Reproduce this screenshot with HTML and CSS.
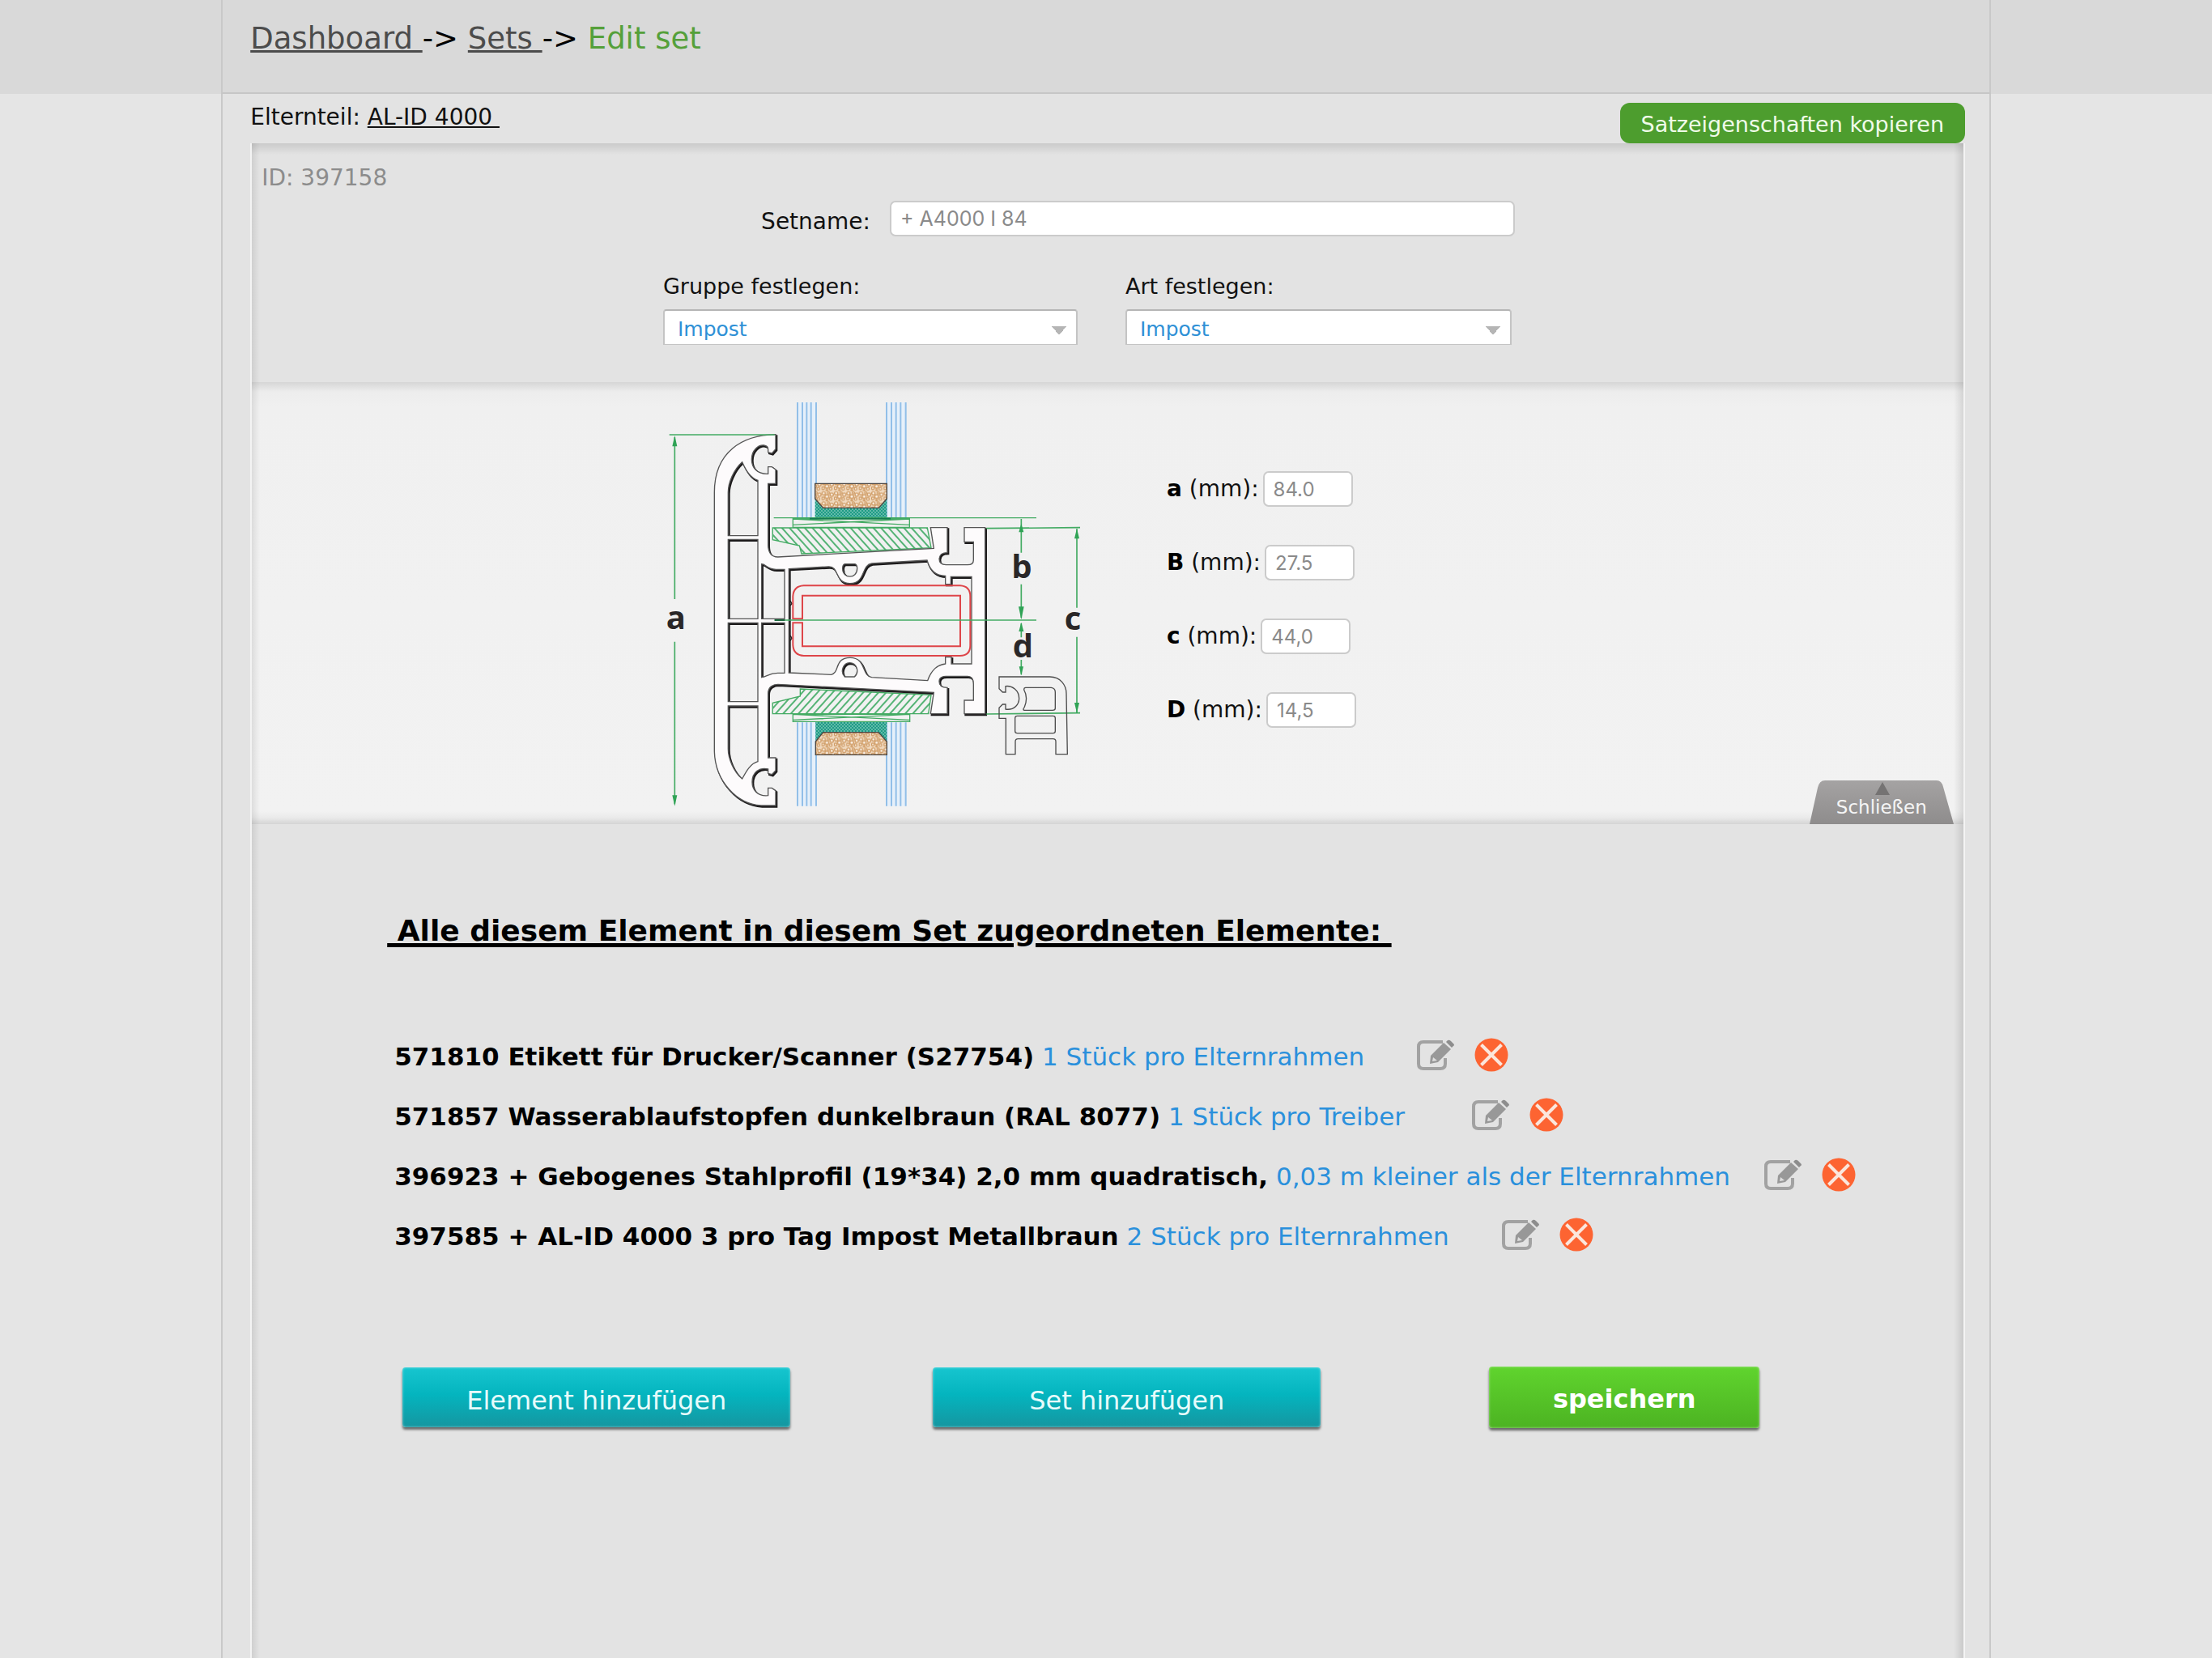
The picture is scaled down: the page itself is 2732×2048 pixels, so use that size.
FILE: index.html
```html
<!DOCTYPE html>
<html lang="de">
<head>
<meta charset="utf-8">
<meta name="viewport" content="width=device-width, initial-scale=1">
<title>Edit set</title>
<link rel="stylesheet" href="styles.css">
</head>
<body>
<svg class="sprite" aria-hidden="true">
  <symbol id="icon-edit" viewBox="0 0 48 38">
    <path d="M33 3H9Q3 3 3 9V30Q3 36 9 36H30Q36 36 36 30V23" fill="none" stroke="#a2a2a2" stroke-width="4"/>
    <path d="M17 30L18 20L34 4L43 12L27 28Z" fill="#989898"/>
    <path d="M37 3L39 1Q41 0 43 2L46 5Q48 7 46 8L44 10Z" fill="#8d8d8d"/>
    <path d="M21 22L26 26L20 27Z" fill="#dedede"/>
  </symbol>
  <symbol id="icon-delete" viewBox="0 0 42 42">
    <circle cx="21" cy="21" r="20.5" fill="#fd6432"/>
    <path d="M8.500 8.500L33.500 33.500M33.500 8.500L8.500 33.500" stroke="#fbe6dc" stroke-width="4"/>
  </symbol>
</svg>

<header class="topbar">
  <nav class="frame crumbs" aria-label="Breadcrumb"><a href="#">Dashboard </a>-&gt; <a href="#">Sets </a>-&gt; <span class="crumbs-current">Edit set</span></nav>
</header>

<main class="frame content">
  <div class="parent-row">
    <p class="parent">Elternteil: <a href="#">AL-ID 4000 </a></p>
    <button class="copy" type="button">Satzeigenschaften kopieren</button>
  </div>

  <div class="panel">
    <section class="settings">
      <p class="set-id">ID: 397158</p>
      <div class="form">
        <div class="name-row">
          <label for="setname">Setname:</label>
          <input class="box name" id="setname" type="text" value="+ A4000 I 84">
        </div>
        <div class="select-row">
          <div class="group">
            <label for="gruppe">Gruppe festlegen:</label>
            <select id="gruppe"><option>Impost</option></select>
          </div>
          <div class="kind">
            <label for="art">Art festlegen:</label>
            <select id="art"><option>Impost</option></select>
          </div>
        </div>
      </div>
    </section>

    <section class="measures">
      <svg class="drawing" viewBox="57 30 1575 1530" role="img" aria-label="Profilschnitt">
        <defs>
          <pattern id="hatch-down" width="21" height="21" patternUnits="userSpaceOnUse" patternTransform="rotate(-42)"><path d="M3 0V21" stroke="#35a75c" stroke-width="5"/></pattern>
          <pattern id="hatch-up" width="21" height="21" patternUnits="userSpaceOnUse" patternTransform="rotate(42)"><path d="M3 0V21" stroke="#35a75c" stroke-width="5"/></pattern>
          <pattern id="dots" width="12" height="12" patternUnits="userSpaceOnUse"><path d="M0 0H12V12H0Z" fill="#1f9c86"/><circle cx="3" cy="3" r="2" fill="#d5f0e8"/><circle cx="9" cy="9" r="2" fill="#d5f0e8"/></pattern>
          <pattern id="sand" width="46" height="38" patternUnits="userSpaceOnUse"><path d="M0 0H46V38H0Z" fill="#f0d9bf"/><g fill="#fbf3ea" stroke="#cf9a62" stroke-width="4"><circle cx="8" cy="8" r="6"/><circle cx="26" cy="6" r="4"/><circle cx="38" cy="13" r="6"/><circle cx="20" cy="20" r="7"/><circle cx="6" cy="27" r="5"/><circle cx="34" cy="29" r="5"/><circle cx="20" cy="34" r="3"/></g></pattern>
          <path id="profile" fill-rule="evenodd" d="M474 170C350 172 247 235 247 385V1345C250 1455 330 1540 420 1545H474V1490L460 1480H446V1508C405 1512 387 1485 387 1458C387 1420 415 1402 446 1410V1426L460 1430L474 1415V1368H446V1130C446 1105 465 1096 482 1096L1060 1126L1048 1205H1110V1108C1085 1108 1080 1098 1080 1085C1080 1070 1095 1066 1105 1066H1185C1203 1066 1207 1080 1207 1095V1155H1173V1205H1250V515H1173V568H1207V635C1207 648 1197 653 1185 653H1105C1085 653 1080 640 1080 630C1082 614 1090 608 1110 608V515H1048L1060 592L482 624C457 624 446 605 446 580V352H474V300L460 290H446V316C402 318 385 290 385 262C385 228 410 208 430 210Q446 212 446 225V236L460 240L474 224Z
            M350 272C318 300 298 350 298 385V545H408V340C380 330 365 305 350 272Z
            M298 559H408V853H298Z M298 868H408V1160H298Z
            M298 1176H408V1382C380 1390 365 1418 350 1446C318 1420 298 1370 298 1335Z
            M422 650C438 650 440 668 475 670H507V853H422Z
            M422 868H507V1054H482C450 1054 440 1068 422 1070Z
            M523 668L670 660C712 658 690 722 750 722C808 722 790 654 830 648L1035 636C1042 662 1060 694 1103 694V725H1123V697H1200V1020H1125V995H1103V1020C1060 1025 1045 1060 1037 1082L830 1070C792 1065 810 997 750 997C690 997 712 1054 680 1060L523 1053Z
            M730 650H768Q776 652 776 667C776 706 722 706 722 667Q722 652 730 650Z
            M730 1068C712 1050 724 1016 748 1016C774 1016 786 1050 766 1068Z"/>
        </defs>
        <path d="M555 51H624V479H555ZM885 51H956V479H885ZM555 1237H624V1547H555ZM885 1237H956V1547H885Z" fill="#e6f0fa"/>
        <g stroke="#92bfe8" stroke-width="6">
          <path d="M555 51V479M573 51V479M589 51V479M605 51V479M624 51V479M885 51V479M903 51V479M920 51V479M937 51V479M956 51V479"/>
          <path d="M555 1237V1547M573 1237V1547M589 1237V1547M605 1237V1547M624 1237V1547M885 1237V1547M903 1237V1547M920 1237V1547M937 1237V1547M956 1237V1547"/>
        </g>
        <path d="M620 405L650 442H856L886 405V483H620ZM622 1236H886V1308L855 1274H650L622 1308Z" fill="url(#dots)"/>
        <path d="M620 352H886V408L856 442H650L620 408ZM622 1308L650 1274H855L886 1308V1357H622Z" fill="url(#sand)" stroke="#4a4440" stroke-width="4"/>
        <g stroke="#43ab63" stroke-width="4" fill="none">
          <path d="M463 516H1036L1050 590L570 612L562 582L463 560Z" fill="url(#hatch-down)"/>
          <path d="M463 1205H1040L1050 1135L565 1113V1140L463 1165Z" fill="url(#hatch-up)"/>
          <path d="M467 479H1440M538 483H970V514H538ZM538 483L970 505M970 483L538 505M538 1207H971V1234H538ZM538 1207L971 1228M971 1207L538 1228"/>
        </g>
        <path d="M600 482H900" stroke="#157a52" stroke-width="5"/>
        <use href="#profile" x="4" y="5" fill="#1c1a1b" stroke="#1c1a1b" stroke-width="6"/>
        <use href="#profile" fill="#fdfbfc" stroke="#555" stroke-width="4"/>
        <path d="M528 786L534 797L528 804M528 915L534 925L528 934" fill="none" stroke="#222" stroke-width="4"/>
        <g fill="none" stroke="#de4549" stroke-width="6">
          <path d="M538 853V770Q540 732 578 730H1157Q1195 732 1195 770V952Q1195 990 1157 990H578Q540 988 538 950V868H573V955H1158V767H573V853Z"/>
        </g>
        <path d="M470 858H1440" stroke="#43ab63" stroke-width="4"/>
        <path d="M470 858H508" stroke="#1f6b40" stroke-width="6"/>
        <g stroke="#43ab63" stroke-width="5" fill="none">
          <path d="M80 171H470M100 180V780M100 938V1540M1384 483V608M1384 725V850M1384 870V922M1384 1005V1060M1590 520V812M1590 920V1200M1255 518L1602 515M1255 1206L1602 1202"/>
        </g>
        <path d="M100 174L109 214H91ZM100 1547L109 1507H91ZM1384 500L1393 532H1375ZM1384 856L1394 808H1374ZM1384 866L1393 900H1375ZM1384 1063L1392 1030H1376ZM1590 518L1599 556H1581ZM1590 1202L1599 1164H1581Z" fill="#2fa355"/>
        <g fill="none" stroke="#4c4c4c" stroke-width="4">
          <path d="M1302 1068H1490C1530 1068 1551 1100 1551 1130L1555 1355H1512V1308Q1512 1298 1502 1298H1372Q1362 1298 1362 1308V1355H1327V1222H1302V1183L1315 1170H1326V1188C1360 1193 1376 1168 1376 1148C1376 1118 1350 1100 1326 1103V1125H1315L1302 1112Z"/>
          <path d="M1400 1108H1495Q1510 1110 1510 1125V1185Q1510 1192 1500 1192H1395Q1388 1190 1396 1180C1406 1155 1405 1135 1394 1116Q1394 1108 1400 1108Z"/>
          <rect x="1361" y="1213" width="149" height="64" rx="8"/>
        </g>
        <g class="dims">
          <text x="68" y="892">a</text><text x="1348" y="703">b</text><text x="1544" y="895">c</text><text x="1352" y="996">d</text>
        </g>
      </svg>
      <div class="fields">
        <div class="field"><label for="ma"><b>a</b> (mm):</label><input class="box size" id="ma" type="text" value="84.0"></div>
        <div class="field"><label for="mb"><b>B</b> (mm):</label><input class="box size" id="mb" type="text" value="27.5"></div>
        <div class="field"><label for="mc"><b>c</b> (mm):</label><input class="box size" id="mc" type="text" value="44,0"></div>
        <div class="field"><label for="md"><b>D</b> (mm):</label><input class="box size" id="md" type="text" value="14,5"></div>
      </div>
      <button class="close" type="button">
        <svg class="close-shape" viewBox="0 0 178 54" aria-hidden="true">
          <defs><linearGradient id="tab" x2="0" y2="1"><stop stop-color="#a5a3a3"/><stop offset="1" stop-color="#8e8c8c"/></linearGradient></defs>
          <path d="M0 54L10 9Q12 0 19 0H157Q163 0 165 8L178 54Z" fill="url(#tab)"/>
          <path d="M90 2L99 18H81Z" fill="#757373"/>
        </svg>
        <span class="close-text">Schließen</span>
      </button>
    </section>

    <section class="assigned">
      <h1>&nbsp;Alle diesem Element in diesem Set zugeordneten Elemente:&nbsp;</h1>
      <ul class="items">
        <li class="item">
          <p><b>571810 Etikett für Drucker/Scanner (S27754)</b> <span>1 Stück pro Elternrahmen</span></p>
          <div class="actions"><button type="button" aria-label="Bearbeiten"><svg class="edit"><use href="#icon-edit"/></svg></button><button type="button" aria-label="Löschen"><svg class="delete"><use href="#icon-delete"/></svg></button></div>
        </li>
        <li class="item item-wide">
          <p><b>571857 Wasserablaufstopfen dunkelbraun (RAL 8077)</b> <span>1 Stück pro Treiber</span></p>
          <div class="actions"><button type="button" aria-label="Bearbeiten"><svg class="edit"><use href="#icon-edit"/></svg></button><button type="button" aria-label="Löschen"><svg class="delete"><use href="#icon-delete"/></svg></button></div>
        </li>
        <li class="item item-tight">
          <p><b>396923 + Gebogenes Stahlprofil (19*34) 2,0 mm quadratisch,</b> <span>0,03 m kleiner als der Elternrahmen</span></p>
          <div class="actions"><button type="button" aria-label="Bearbeiten"><svg class="edit"><use href="#icon-edit"/></svg></button><button type="button" aria-label="Löschen"><svg class="delete"><use href="#icon-delete"/></svg></button></div>
        </li>
        <li class="item">
          <p><b>397585 + AL-ID 4000 3 pro Tag Impost Metallbraun</b> <span>2 Stück pro Elternrahmen</span></p>
          <div class="actions"><button type="button" aria-label="Bearbeiten"><svg class="edit"><use href="#icon-edit"/></svg></button><button type="button" aria-label="Löschen"><svg class="delete"><use href="#icon-delete"/></svg></button></div>
        </li>
      </ul>
      <div class="buttons">
        <button class="add" type="button">Element hinzufügen</button>
        <button class="add" type="button">Set hinzufügen</button>
        <button class="save" type="submit">speichern</button>
      </div>
    </section>
  </div>
</main>
</body>
</html>
```

FILE: styles.css
```css
* { box-sizing: border-box; }

body {
  margin: 0;
  min-height: 100vh;
  display: flex;
  flex-direction: column;
  background: #e5e5e5;
  color: #111;
  font: 27px/40px "DejaVu Sans", Verdana, sans-serif;
}

p, h1, ul { margin: 0; padding: 0; }

button, input, select { font: inherit; }

button {
  border: 0;
  padding: 0;
  background: none;
  cursor: pointer;
}

.sprite { position: absolute; width: 0; height: 0; }

.frame {
  width: 80%;
  margin: 0 auto;
  padding: 0 30px 0 34px;
  border: solid #c9c9c9;
  border-width: 0 2px;
}

.topbar { background: #d9d9d9; }

.crumbs {
  height: 116px;
  padding-top: 24px;
  border-bottom: 2px solid #c6c6c6;
  font-size: 37px;
  line-height: 48px;
  color: #000;
}

.crumbs a { color: #4c4c4c; white-space: pre; }
.crumbs-current { color: #55a03a; }

.content {
  flex: 1;
  display: flex;
  flex-direction: column;
  background: #e3e3e3;
}

.parent-row {
  display: flex;
  justify-content: space-between;
  align-items: flex-start;
  padding-top: 11px;
}

.parent { font-size: 28px; line-height: 36px; }
.parent a { color: inherit; white-space: pre; }

.copy {
  width: 426px;
  height: 50px;
  padding-top: 4px;
  border-radius: 12px;
  background: #4d9d2e;
  color: #f0fbe9;
}

.panel {
  position: relative;
  flex: 1;
  display: flex;
  flex-direction: column;
  border-left: 2px solid #f3f3f3;
}

/* soft recess along the panel edges */
.panel::after {
  content: "";
  position: absolute;
  inset: 0;
  pointer-events: none;
  border-right: 2px solid #f3f3f3;
  background:
    linear-gradient(#0000001c, #00000000) top / 100% 14px no-repeat,
    linear-gradient(to right, #00000016, #00000000) left / 10px 100% no-repeat,
    linear-gradient(to left, #0000001c, #00000000) right / 12px 100% no-repeat;
}

.settings { padding: 23px 0 46px; }

.set-id { padding-left: 12px; font-size: 28px; color: #8c8c8c; }

.form {
  display: flex;
  flex-direction: column;
  gap: 42px;
  width: 1052px;
  margin: 8px 0 0 24%;
}

.name-row { display: flex; justify-content: flex-end; gap: 24px; }
.name-row label { padding-top: 8px; font-size: 28px; line-height: 36px; }

.box {
  height: 44px;
  padding: 0 11px;
  border: 2px solid #cbcbcb;
  border-radius: 7px;
  background: #fff;
  color: #8a8a8a;
  font: 24px/28px Inter, sans-serif;
}

.name { width: 772px; font-size: 25px; }
.size { width: 111px; }

.select-row { display: flex; gap: 59px; }
.select-row > div { display: flex; flex-direction: column; gap: 8px; }
.group { width: 512px; }
.kind { width: 477px; }

select {
  appearance: none;
  height: 44px;
  padding: 4px 16px 0;
  border: solid #c4c4c4;
  border-width: 2px 2px 1px;
  border-top-color: #b5b5b5;
  border-radius: 4px 4px 0 0;
  background:
    linear-gradient(to bottom right, #b5b5b5 50%, #00000000 50%) right 12px top 19px / 9px 11px no-repeat,
    linear-gradient(to bottom left, #b5b5b5 50%, #00000000 50%) right 21px top 19px / 9px 11px no-repeat,
    #fff;
  color: #2e90d6;
  font-size: 25px;
  line-height: 32px;
}

.measures {
  position: relative;
  display: flex;
  gap: 97px;
  padding: 18px 0 18px 24%;
  background: linear-gradient(#d6d6d6, #ededed 12px, #f0f0f0 30px, #f2f2f2 calc(100% - 16px), #eaeaea calc(100% - 8px), #d4d4d4);
}

.drawing { flex: none; width: 525px; height: 510px; }

.dims {
  font: 700 120px "Open Sans", sans-serif;
  fill: #2a2728;
}

.fields {
  display: flex;
  flex-direction: column;
  gap: 47px;
  padding-top: 92px;
  font-size: 28px;
}

.field { display: flex; align-items: center; gap: 5px; height: 44px; }
.field b { color: #000; }

.close {
  position: absolute;
  right: 14px;
  bottom: 0;
  display: grid;
  width: 178px;
  height: 54px;
  color: #f5f5f5;
  font-size: 23px;
  line-height: 28px;
}

.close > * { grid-area: 1 / 1; }
.close-shape { width: 178px; height: 54px; }
.close-text { position: relative; padding-top: 19px; }

.assigned { flex: 1; padding: 108px 0 80px 167px; }

h1 {
  color: #000;
  font-size: 36px;
  line-height: 48px;
  text-decoration: underline;
  text-decoration-thickness: 5px;
}

.items {
  margin: 94px 0 124px 9px;
  list-style: none;
  color: #000;
  font-size: 31px;
}

.item { display: flex; align-items: center; gap: 64px; height: 74px; }
.item-wide { gap: 82px; }
.item-tight { gap: 41px; }
.item span { color: #2a90dc; }

.actions { display: flex; align-items: center; gap: 24px; padding-bottom: 4px; }
.actions svg { display: block; }
.edit { width: 48px; height: 38px; }
.delete { width: 42px; height: 42px; }

.buttons {
  display: flex;
  align-items: center;
  gap: 176px;
  padding-left: 19px;
  font-size: 32px;
}

.add, .save {
  border-radius: 4px;
  box-shadow: inset 0 0 3px #ffffff88, 0 3px 3px #00000088;
}

.add {
  width: 479px;
  height: 74px;
  padding-top: 8px;
  background: linear-gradient(#17c5cf, #04b5bf 45%, #1596a0);
  color: #e6fbfb;
}

.save {
  width: 334px;
  height: 76px;
  margin-left: 32px;
  padding-top: 4px;
  background: linear-gradient(#60d42e, #4cb322);
  color: #fff;
  font-weight: 700;
}
```
